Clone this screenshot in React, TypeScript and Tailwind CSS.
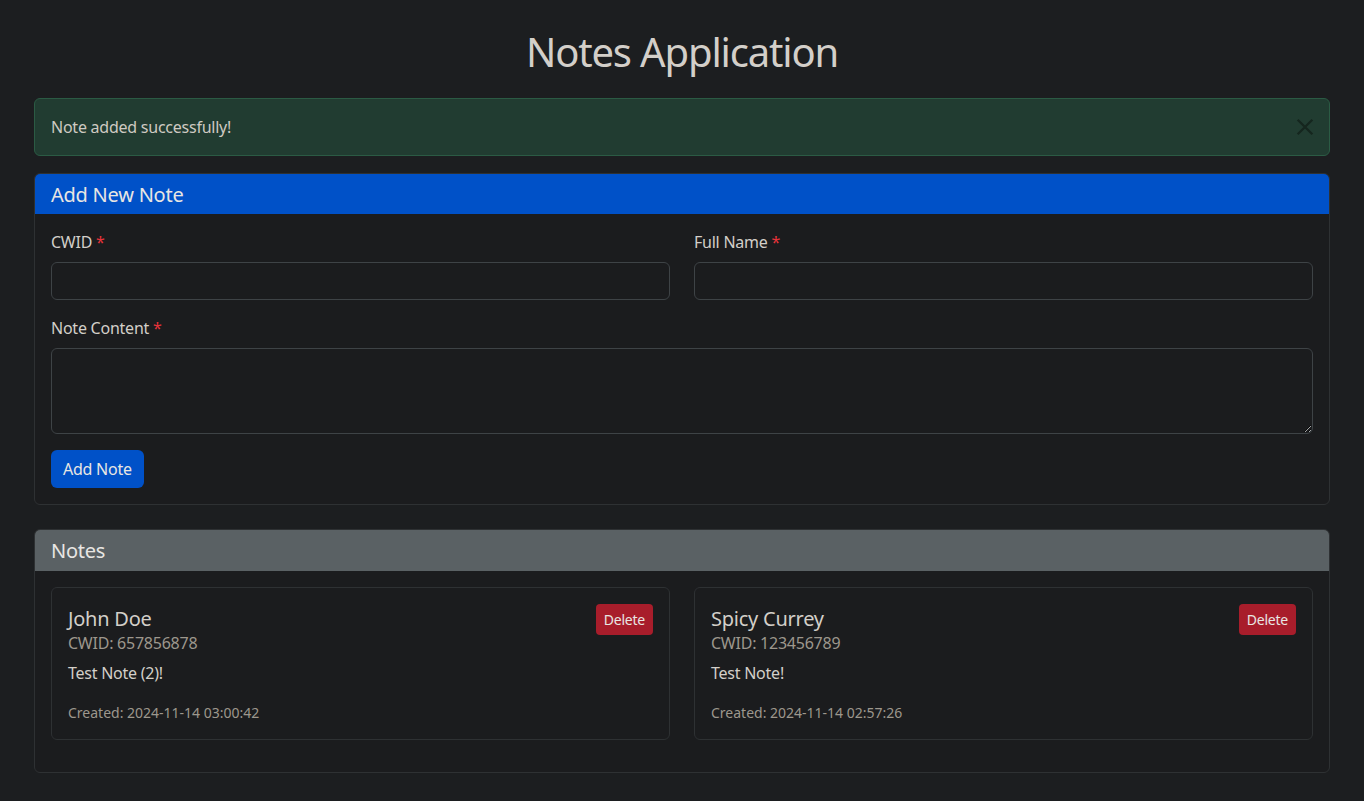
import React from "react";

const font = { fontFamily: '"Noto Sans", "Open Sans", sans-serif', letterSpacing: "-0.015em" };

function Req() {
  return <span className="text-[#e8333a]">*</span>;
}

function NoteCard({ name, cwid, text, created }: { name: string; cwid: string; text: string; created: string }) {
  return (
    <div className="rounded-[6px] border border-[#2e3133] bg-[#1b1c1e] p-4">
      <div className="flex items-start justify-between">
        <div>
          <div className="pt-[3px] text-[20px] leading-[24px] text-[#d3cfc9]">{name}</div>
          <div className="text-[16px] leading-[24px] text-[#9d978d]">CWID: {cwid}</div>
        </div>
        <button className="h-[31px] rounded-[4px] bg-[#a81d2b] px-2 text-[14px] leading-[21px] text-[#e8e6e3]">Delete</button>
      </div>
      <div className="mt-[6px] text-[16px] leading-[24px] text-[#d3cfc9]">{text}</div>
      <div className="mt-[17px] text-[14px] leading-[21px] tracking-normal text-[#9d978d]">{created}</div>
    </div>
  );
}

export default function App() {
  return (
    <div className="min-h-[801px] bg-[#1c1e20]" style={font}>
      <div className="mx-auto w-[1320px] px-3 pb-[28px] pt-[28px]">
        <h1 className="mb-[22px] text-center text-[40px] leading-[48px] tracking-[-0.029em] text-[#d3cfc9]">Notes Application</h1>

        <div className="mb-[17px] flex h-[58px] items-center justify-between rounded-[6px] border border-[#2b5b44] bg-[#213c31] px-4 text-[16px] text-[#cfcac2]">
          <span>Note added successfully!</span>
          <svg width="18" height="18" viewBox="0 0 16 16" className="mr-[-1px]">
            <path d="M1.5 1.5 L14.5 14.5 M14.5 1.5 L1.5 14.5" stroke="#15261e" strokeWidth="2" />
          </svg>
        </div>

        <div className="mb-6 overflow-hidden rounded-[6px] border border-[#2e3133] bg-[#1b1c1e]">
          <div className="bg-[#0051c8] px-4 pb-[7px] pt-[9px] text-[20px] leading-[24px] text-[#e8e6e3]">Add New Note</div>
          <div className="p-4">
            <div className="grid grid-cols-2 gap-6">
              <div>
                <div className="mb-2 pt-[1px] text-[16px] leading-[23px] text-[#d3cfc9]">
                  CWID <Req />
                </div>
                <input className="block h-[38px] w-full rounded-[6px] border border-[#3e4346] bg-[#1b1c1e] outline-none" />
              </div>
              <div>
                <div className="mb-2 pt-[1px] text-[16px] leading-[23px] text-[#d3cfc9]">
                  Full Name <Req />
                </div>
                <input className="block h-[38px] w-full rounded-[6px] border border-[#3e4346] bg-[#1b1c1e] outline-none" />
              </div>
            </div>
            <div className="mt-4 mb-2 pt-[1px] text-[16px] leading-[23px] text-[#d3cfc9]">
              Note Content <Req />
            </div>
            <textarea className="block h-[86px] w-full rounded-[6px] border border-[#3e4346] bg-[#1b1c1e] outline-none" />
            <button className="mt-4 h-[38px] rounded-[6px] bg-[#0051c8] px-3 pt-[1px] text-[16px] leading-[23px] text-[#e8e6e3]">Add Note</button>
          </div>
        </div>

        <div className="overflow-hidden rounded-[6px] border border-[#2e3133] bg-[#1b1c1e]">
          <div className="bg-[#5a6164] px-4 pb-[8px] pt-[9px] text-[20px] leading-[24px] text-[#e8e6e3]">Notes</div>
          <div className="p-4">
            <div className="grid grid-cols-2 gap-6">
              <NoteCard name="John Doe" cwid="657856878" text="Test Note (2)!" created="Created: 2024-11-14 03:00:42" />
              <NoteCard name="Spicy Currey" cwid="123456789" text="Test Note!" created="Created: 2024-11-14 02:57:26" />
            </div>
            <div className="h-4" />
          </div>
        </div>
      </div>
    </div>
  );
}
